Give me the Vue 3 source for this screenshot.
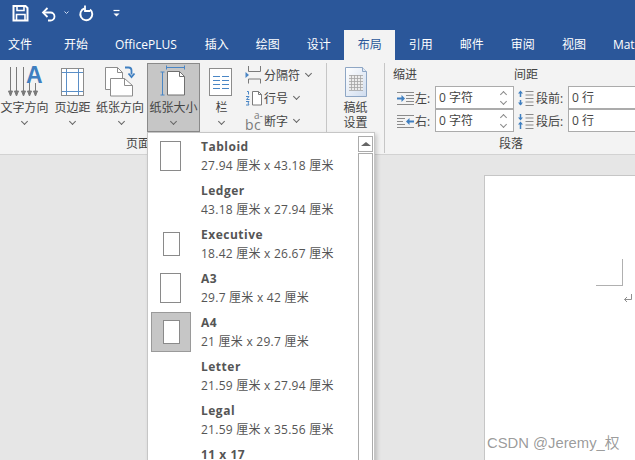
<script setup>
const tabs = [
  { name: '文件', cls: 'first' }, { name: '开始' }, { name: 'OfficePLUS', cls: 'plus' }, { name: '插入' }, { name: '绘图' },
  { name: '设计' }, { name: '布局', cls: 'active' }, { name: '引用' }, { name: '邮件' }, { name: '审阅' },
  { name: '视图' }, { name: 'Mat' }
]
const papers = [
  { name: 'Tabloid', size: '27.94 厘米 x 43.18 厘米', thumb: 'big' },
  { name: 'Ledger', size: '43.18 厘米 x 27.94 厘米', thumb: '' },
  { name: 'Executive', size: '18.42 厘米 x 26.67 厘米', thumb: 'small' },
  { name: 'A3', size: '29.7 厘米 x 42 厘米', thumb: 'big' },
  { name: 'A4', size: '21 厘米 x 29.7 厘米', thumb: 'small', selected: true },
  { name: 'Letter', size: '21.59 厘米 x 27.94 厘米', thumb: '' },
  { name: 'Legal', size: '21.59 厘米 x 35.56 厘米', thumb: '' },
  { name: '11 x 17', size: '', thumb: '' }
]
</script>

<template>
  <div class="app">
    <div class="titlebar">
      <svg class="qat" width="130" height="30" viewBox="0 0 130 30" fill="none" stroke="#fff">
        <path d="M13.500 6h12l2 2v12.500h-14z" stroke-width="2" />
        <path d="M17 6v4.500h7V6" stroke-width="1.600" />
        <path d="M16.500 20.500v-6h8.500v6" stroke-width="1.600" />
        <path d="M44 12.500h6.500a4 4 0 0 1 0 8H48" stroke-width="1.800" />
        <path d="M47.500 8 43 12.500l4.500 4.500" stroke-width="1.800" />
        <path d="M64.500 11.500l2 2 2-2" stroke="#cfdcf0" />
        <path d="M84.500 8.500a6 6 0 1 0 5.500 1" stroke-width="1.900" />
        <path d="M85 5.500v5.500h5" stroke-width="1.800" />
        <path d="M113.500 10.500h6" stroke-width="1.200" />
        <path d="M113.500 13.500h6l-3 3z" fill="#fff" stroke="none" />
      </svg>
    </div>

    <div class="tabs">
      <div v-for="t in tabs" :key="t.name" class="tab" :class="t.cls">{{ t.name }}</div>
    </div>

    <div class="ribbon">
      <section class="group page-group">
        <div class="group-main">
          <div class="big w-text">
            <svg class="big-icon" width="49" height="37" viewBox="0 3 49 37" fill="none" stroke="#7a7a7a">
              <path d="M10.500 7v27M16.500 7v27M23.500 7v27M29.500 23v11M35.500 23v11" />
              <path d="M8.500 31l2 5 2-5zM14.500 31l2 5 2-5zM21.500 31l2 5 2-5zM27.500 31l2 5 2-5zM33.500 31l2 5 2-5z" fill="#7a7a7a" />
              <text x="26" y="23" class="icon-a">A</text>
            </svg>
            <span class="lbl">文字方向</span>
            <i class="chev"></i>
          </div>
          <div class="big w-margin">
            <svg class="big-icon" width="47" height="37" viewBox="0 3 47 37" fill="none">
              <rect x="12.500" y="8.500" width="22" height="27" fill="#fff" stroke="#8c8c8c" />
              <path d="M17.500 9v26M29.500 9v26M13 12.500h21M13 31.500h21" stroke="#5b8fc7" />
            </svg>
            <span class="lbl">页边距</span>
            <i class="chev"></i>
          </div>
          <div class="big w-orient">
            <svg class="big-icon" width="51" height="37" viewBox="0 3 51 37" fill="none">
              <path d="M9.500 7.500h12l5 5v17h-17z" fill="#fff" stroke="#8c8c8c" />
              <path d="M21.500 7.500v5h5" stroke="#8c8c8c" />
              <path d="M14.500 18.500h14l8 7v10.500h-22z" fill="#fff" stroke="#8c8c8c" />
              <path d="M28.500 18.500v7h8" stroke="#8c8c8c" />
              <path d="M29 7.500h3.500a3 3 0 0 1 3 3v4" stroke="#3f7fc0" stroke-width="1.800" />
              <path d="M32.500 13.500l3 3.500 3-3.500" stroke="#3f7fc0" stroke-width="1.800" />
            </svg>
            <span class="lbl">纸张方向</span>
            <i class="chev"></i>
          </div>
          <div class="big w-size selected">
            <svg class="big-icon" width="52" height="36" viewBox="0 1 52 36" fill="none">
              <path d="M19.500 8.500h12l5 5v18.500h-17z" fill="#fff" stroke="#6f6f6f" />
              <path d="M31.500 8.500v5h5" stroke="#6f6f6f" />
              <path d="M18.500 4.500h18M18.500 2.500v4M36.500 2.500v4" stroke="#4a86c5" />
              <path d="M14.500 9v23M12.500 9h4M12.500 32h4" stroke="#4a86c5" />
            </svg>
            <span class="lbl">纸张大小</span>
            <i class="chev"></i>
          </div>
          <div class="big w-col">
            <svg class="big-icon" width="43" height="37" viewBox="0 3 43 37" fill="none">
              <rect x="9.500" y="8.500" width="22" height="27" fill="#fff" stroke="#8c8c8c" />
              <path d="M13 16.500h7M22 16.500h7M13 20.500h7M22 20.500h7M13 24.500h7M22 24.500h7M13 28.500h7M22 28.500h7" stroke="#4a86c5" />
            </svg>
            <span class="lbl">栏</span>
            <i class="chev"></i>
          </div>
          <div class="small-col">
            <div class="small">
              <svg width="18" height="20" viewBox="0 0 18 20" fill="none">
                <path d="M3.500 1v5.500h12V1M3.500 18.500v-4.500h12v4.500" stroke="#7a7a7a" />
                <path d="M0.500 7v6l3.500-3z" fill="#4a86c5" />
              </svg>
              <span>分隔符</span><i class="chev side"></i>
            </div>
            <div class="small">
              <svg width="18" height="20" viewBox="0 0 18 20" fill="none">
                <path d="M7.500 3.500h6l3 3v10.500h-9z" fill="#fff" stroke="#7a7a7a" />
                <path d="M13.500 3.500v3h3" stroke="#7a7a7a" />
                <path d="M2 3.500h1.500v3M1 8.500h3l-2.500 3h3M1 13.500h3l-1 1.500 1 2h-3" stroke="#4a86c5" />
              </svg>
              <span>行号</span><i class="chev side"></i>
            </div>
            <div class="small">
              <span class="hyphen"><em>a-</em><b>bc</b></span>
              <span>断字</span><i class="chev side"></i>
            </div>
          </div>
        </div>
        <div class="group-label page-label">页面设置</div>
      </section>

      <section class="group paper-group">
        <svg width="26" height="32" viewBox="0 0 26 32" fill="none" class="paper-icon">
          <defs>
            <linearGradient id="pg" x1="0" y1="0" x2="1" y2="1">
              <stop offset="0" stop-color="#fff" />
              <stop offset="1" stop-color="#cfdcee" />
            </linearGradient>
          </defs>
          <path d="M2.500 1.500h17l4 4v25h-21z" fill="url(#pg)" stroke="#8ea6c4" />
          <path d="M19.500 1.500v4h4" fill="#dfe8f4" stroke="#8ea6c4" />
          <path d="M6 9h14v15H6z" fill="#ececec" />
          <path d="M6 9.500h14M6 12.500h14M6 15.500h14M6 18.500h14M6 21.500h14M6 24.500h14M8.500 9v15M11.500 9v15M14.500 9v15M17.500 9v15" stroke="#a5a5a5" stroke-width=".8" />
        </svg>
        <span class="lbl tight">稿纸</span>
        <span class="lbl tight">设置</span>
      </section>

      <section class="group para-group">
        <div class="para-cols">
          <div class="para-col indent">
            <div class="para-head">缩进</div>
            <div class="field">
              <svg width="19" height="16" viewBox="0 0 19 16" fill="none">
                <path d="M1 2.500h17M10 5.500h8M10 8.500h8M10 11.500h8M1 14.500h17" stroke="#8a8a8a" />
                <path d="M1 8.500h6" stroke="#3f7fc0" stroke-width="2" />
                <path d="M5.500 5l3.500 3.500-3.500 3.500z" fill="#3f7fc0" />
              </svg>
              <span class="field-lbl">左:</span>
              <div class="input spin">0 字符<span class="spinner"><i class="up"></i><i class="down"></i></span></div>
            </div>
            <div class="field">
              <svg width="19" height="16" viewBox="0 0 19 16" fill="none">
                <path d="M1 2.500h17M1 5.500h8M1 8.500h6M1 11.500h8M1 14.500h17" stroke="#8a8a8a" />
                <path d="M12 8.500h6" stroke="#3f7fc0" stroke-width="2" />
                <path d="M13.500 5L10 8.500l3.500 3.500z" fill="#3f7fc0" />
              </svg>
              <span class="field-lbl">右:</span>
              <div class="input spin">0 字符<span class="spinner"><i class="up"></i><i class="down"></i></span></div>
            </div>
          </div>
          <div class="para-col spacing">
            <div class="para-head">间距</div>
            <div class="field">
              <svg width="17" height="18" viewBox="0 0 17 18" fill="none">
                <path d="M8.500 2.500h8M8.500 6h8M8.500 9.500h8M8.500 13h8M8.500 16.500h8" stroke="#8a8a8a" />
                <path d="M3.500 3v5M3.500 11v5" stroke="#3f7fc0" stroke-width="1.500" />
                <path d="M1 4.500l2.500-3 2.500 3zM1 13.500l2.500 3 2.500-3z" fill="#3f7fc0" />
              </svg>
              <span class="field-lbl">段前:</span>
              <div class="input wide">0 行</div>
            </div>
            <div class="field">
              <svg width="17" height="18" viewBox="0 0 17 18" fill="none">
                <path d="M8.500 2.500h8M8.500 6h8M8.500 9.500h8M8.500 13h8M8.500 16.500h8" stroke="#8a8a8a" />
                <path d="M3.500 2v5M3.500 12v5" stroke="#3f7fc0" stroke-width="1.500" />
                <path d="M1 5.500l2.500 3 2.500-3zM1 12.500l2.500-3 2.500 3z" fill="#3f7fc0" />
              </svg>
              <span class="field-lbl">段后:</span>
              <div class="input wide">0 行</div>
            </div>
          </div>
        </div>
        <div class="group-label para-label">段落</div>
      </section>
    </div>

    <div class="doc">
      <div class="sheet"></div>
    </div>

    <div class="menu">
      <div class="list">
        <div v-for="p in papers" :key="p.name" class="row">
          <div class="thumb-wrap" :class="{ on: p.selected }">
            <div v-if="p.thumb" class="thumb" :class="p.thumb"></div>
          </div>
          <div class="row-text">
            <div class="row-name">{{ p.name }}</div>
            <div v-if="p.size" class="row-size">{{ p.size }}</div>
          </div>
        </div>
      </div>
      <div class="scroll">
        <div class="scroll-btn"><i></i></div>
        <div class="scroll-thumb"></div>
      </div>
    </div>

    <div class="corner"></div>
    <svg class="ret" width="10" height="10" viewBox="0 0 10 10" fill="none" stroke="#8f8f8f">
      <path d="M8.500 1v5.500H1.500" />
      <path d="M4 4 1.500 6.500 4 9" />
    </svg>
    <div class="mark">CSDN @Jeremy_权</div>
  </div>
</template>

<style>
html, body { margin: 0; padding: 0; background: #e6e6e6; }
</style>

<style scoped>
.app {
  position: relative;
  width: 635px;
  height: 460px;
  overflow: hidden;
  display: flex;
  flex-direction: column;
  background: #e6e6e6;
  color: #444;
  font-family: "Open Sans", "Noto Sans CJK SC", sans-serif;
  font-size: 12px;
}
.titlebar { height: 30px; flex: none; background: #2b579a; }
.qat { display: block; }
.tabs { height: 30px; flex: none; display: flex; background: #2b579a; color: #fff; white-space: nowrap; }
.tab { padding: 0 13.5px; line-height: 30px; flex: none; }
.tab.first { padding: 0 18.5px 0 8px; }
.tab.plus { padding-right: 14.5px; }
.tab.active { background: #f3f3f3; color: #2b579a; }

.ribbon { height: 94px; flex: none; display: flex; background: #f3f3f3; border-bottom: 1px solid #d2d2d2; box-sizing: content-box; }
.group { position: relative; flex: none; height: 90px; margin-top: 3px; box-sizing: border-box; border-right: 1px solid #c6c6c6; }
.group-label { line-height: 16px; color: #444; }
.page-group { width: 327px; }
.group-main { display: flex; height: 69px; }
.page-label { padding: 4px 0 0 126px; }
.big { flex: none; display: flex; flex-direction: column; align-items: center; box-sizing: border-box; height: 69px; }
.big-icon { display: block; flex: none; overflow: visible; }
.lbl { line-height: 16px; white-space: nowrap; color: #444; }
.chev { display: block; width: 4px; height: 4px; border-right: 1px solid #666; border-bottom: 1px solid #666; transform: rotate(45deg); margin-top: 3px; }
.chev.side { margin: -2px 0 0 6px; }
.w-text { width: 49px; }
.w-margin { width: 47px; }
.w-orient { width: 51px; }
.w-orient .lbl { margin-left: -3px; }
.w-size { width: 53px; }
.selected { background: #c6c6c6; border: 1px solid #8a8a8a; }
.selected .big-icon { align-self: flex-start; }
.w-col { width: 43px; }
.small-col { flex: none; display: flex; flex-direction: column; }
.small { height: 23px; display: flex; align-items: center; white-space: nowrap; margin-left: 2px; }
.small svg { flex: none; margin-right: 1px; }
.hyphen { position: relative; width: 19px; height: 18px; color: #7a7a7a; flex: none; display: flex; flex-direction: column; font-family: "Open Sans", sans-serif; }
.hyphen b { font-weight: 400; font-size: 14px; line-height: 11px; letter-spacing: .5px; }
.hyphen em { font-style: normal; font-size: 10px; line-height: 7px; padding-left: 9px; }

.paper-group { width: 58px; display: flex; flex-direction: column; align-items: center; }
.paper-icon { display: block; margin: 3px 0 2px; }
.tight { line-height: 15px; }

.para-group { width: 250px; border-right: none; }
.para-cols { display: flex; height: 69px; padding: 2px 0 0 8px; box-sizing: border-box; }
.para-col { flex: none; display: flex; flex-direction: column; }
.indent { width: 121px; }
.spacing { width: 140px; }
.para-head { height: 21px; line-height: 19px; color: #444; }
.field { height: 23px; flex: none; display: flex; align-items: center; margin-left: 3px; }
.indent .field svg { flex: none; }
.spacing .field svg { margin-right: 2px; flex: none; }
.field-lbl { white-space: nowrap; width: 21px; flex: none; color: #444; }
.spacing .field-lbl { width: 32px; }
.input { flex: none; box-sizing: border-box; height: 23px; border: 1px solid #ababab; background: #fff; line-height: 21px; padding-left: 3px; color: #444; position: relative; }
.spin { width: 79px; margin-left: -1px; }
.wide { width: 80px; }
.spinner { position: absolute; right: 2px; top: 0; height: 21px; width: 12px; }
.spinner i { position: absolute; left: 2px; width: 4px; height: 4px; border: solid #8a8a8a; border-width: 1px 0 0 1px; transform: rotate(45deg); }
.spinner .up { top: 5px; }
.spinner .down { top: 12px; transform: rotate(225deg); }
.para-label { padding: 4px 0 0 114px; }

.doc { flex: 1; min-height: 0; padding: 20px 0 0 484px; }
.sheet { height: 300px; background: #fff; border: 1px solid #c6c6c6; border-width: 1px 0 0 1px; }

.menu {
  position: absolute;
  left: 147px;
  top: 132px;
  width: 228px;
  height: 340px;
  box-sizing: border-box;
  background: #fff;
  border: 1px solid #c6c6c6;
  box-shadow: 2px 2px 4px rgba(0, 0, 0, .18);
  display: flex;
}
.list { flex: 1; padding-top: 1px; }
.row { height: 44px; display: flex; align-items: center; }
.thumb-wrap { width: 40px; height: 40px; margin-left: 3px; padding-right: 1px; box-sizing: border-box; border: 1px solid transparent; display: flex; align-items: center; justify-content: center; flex: none; }
.thumb-wrap.on { background: #c6c6c6; border-color: #9a9a9a; }
.thumb { background: #fff; border: 1px solid #8a8a8a; box-sizing: border-box; }
.thumb.big { width: 21px; height: 30px; }
.thumb.small { width: 17px; height: 24px; }
.row-text { margin: 3px 0 0 10px; align-self: flex-start; white-space: nowrap; }
.row-name { font-weight: 700; line-height: 20px; color: #555; letter-spacing: .5px; }
.row-size { line-height: 20px; margin-top: -1px; color: #555; font-size: 12px; letter-spacing: .25px; }
.scroll { width: 15px; flex: none; margin: 3px 1px 0 0; }
.scroll-btn { height: 16px; box-sizing: border-box; border: 1px solid #ababab; background: #fff; display: flex; align-items: center; justify-content: center; }
.scroll-btn i { width: 0; height: 0; border: 4px solid transparent; border-top: 0; border-bottom: 4px solid #666; border-left-width: 5px; border-right-width: 5px; }
.scroll-thumb { height: 400px; box-sizing: border-box; margin-top: 1px; border: 1px solid #ababab; background: #fff; }

.corner { position: absolute; left: 596px; top: 259px; width: 26px; height: 26px; border-right: 1px solid #b0b0b0; border-bottom: 1px solid #b0b0b0; }
.ret { position: absolute; left: 623px; top: 293px; }
.mark { position: absolute; left: 487px; top: 433px; font-family: "Liberation Sans", "Noto Sans CJK SC", sans-serif; font-size: 14.800px; line-height: 20px; color: rgba(90, 90, 90, .62); white-space: nowrap; }
.icon-a { font-family: "Liberation Sans", sans-serif; font-weight: 700; font-size: 23px; fill: #3f7fc0; stroke: none; }
</style>
